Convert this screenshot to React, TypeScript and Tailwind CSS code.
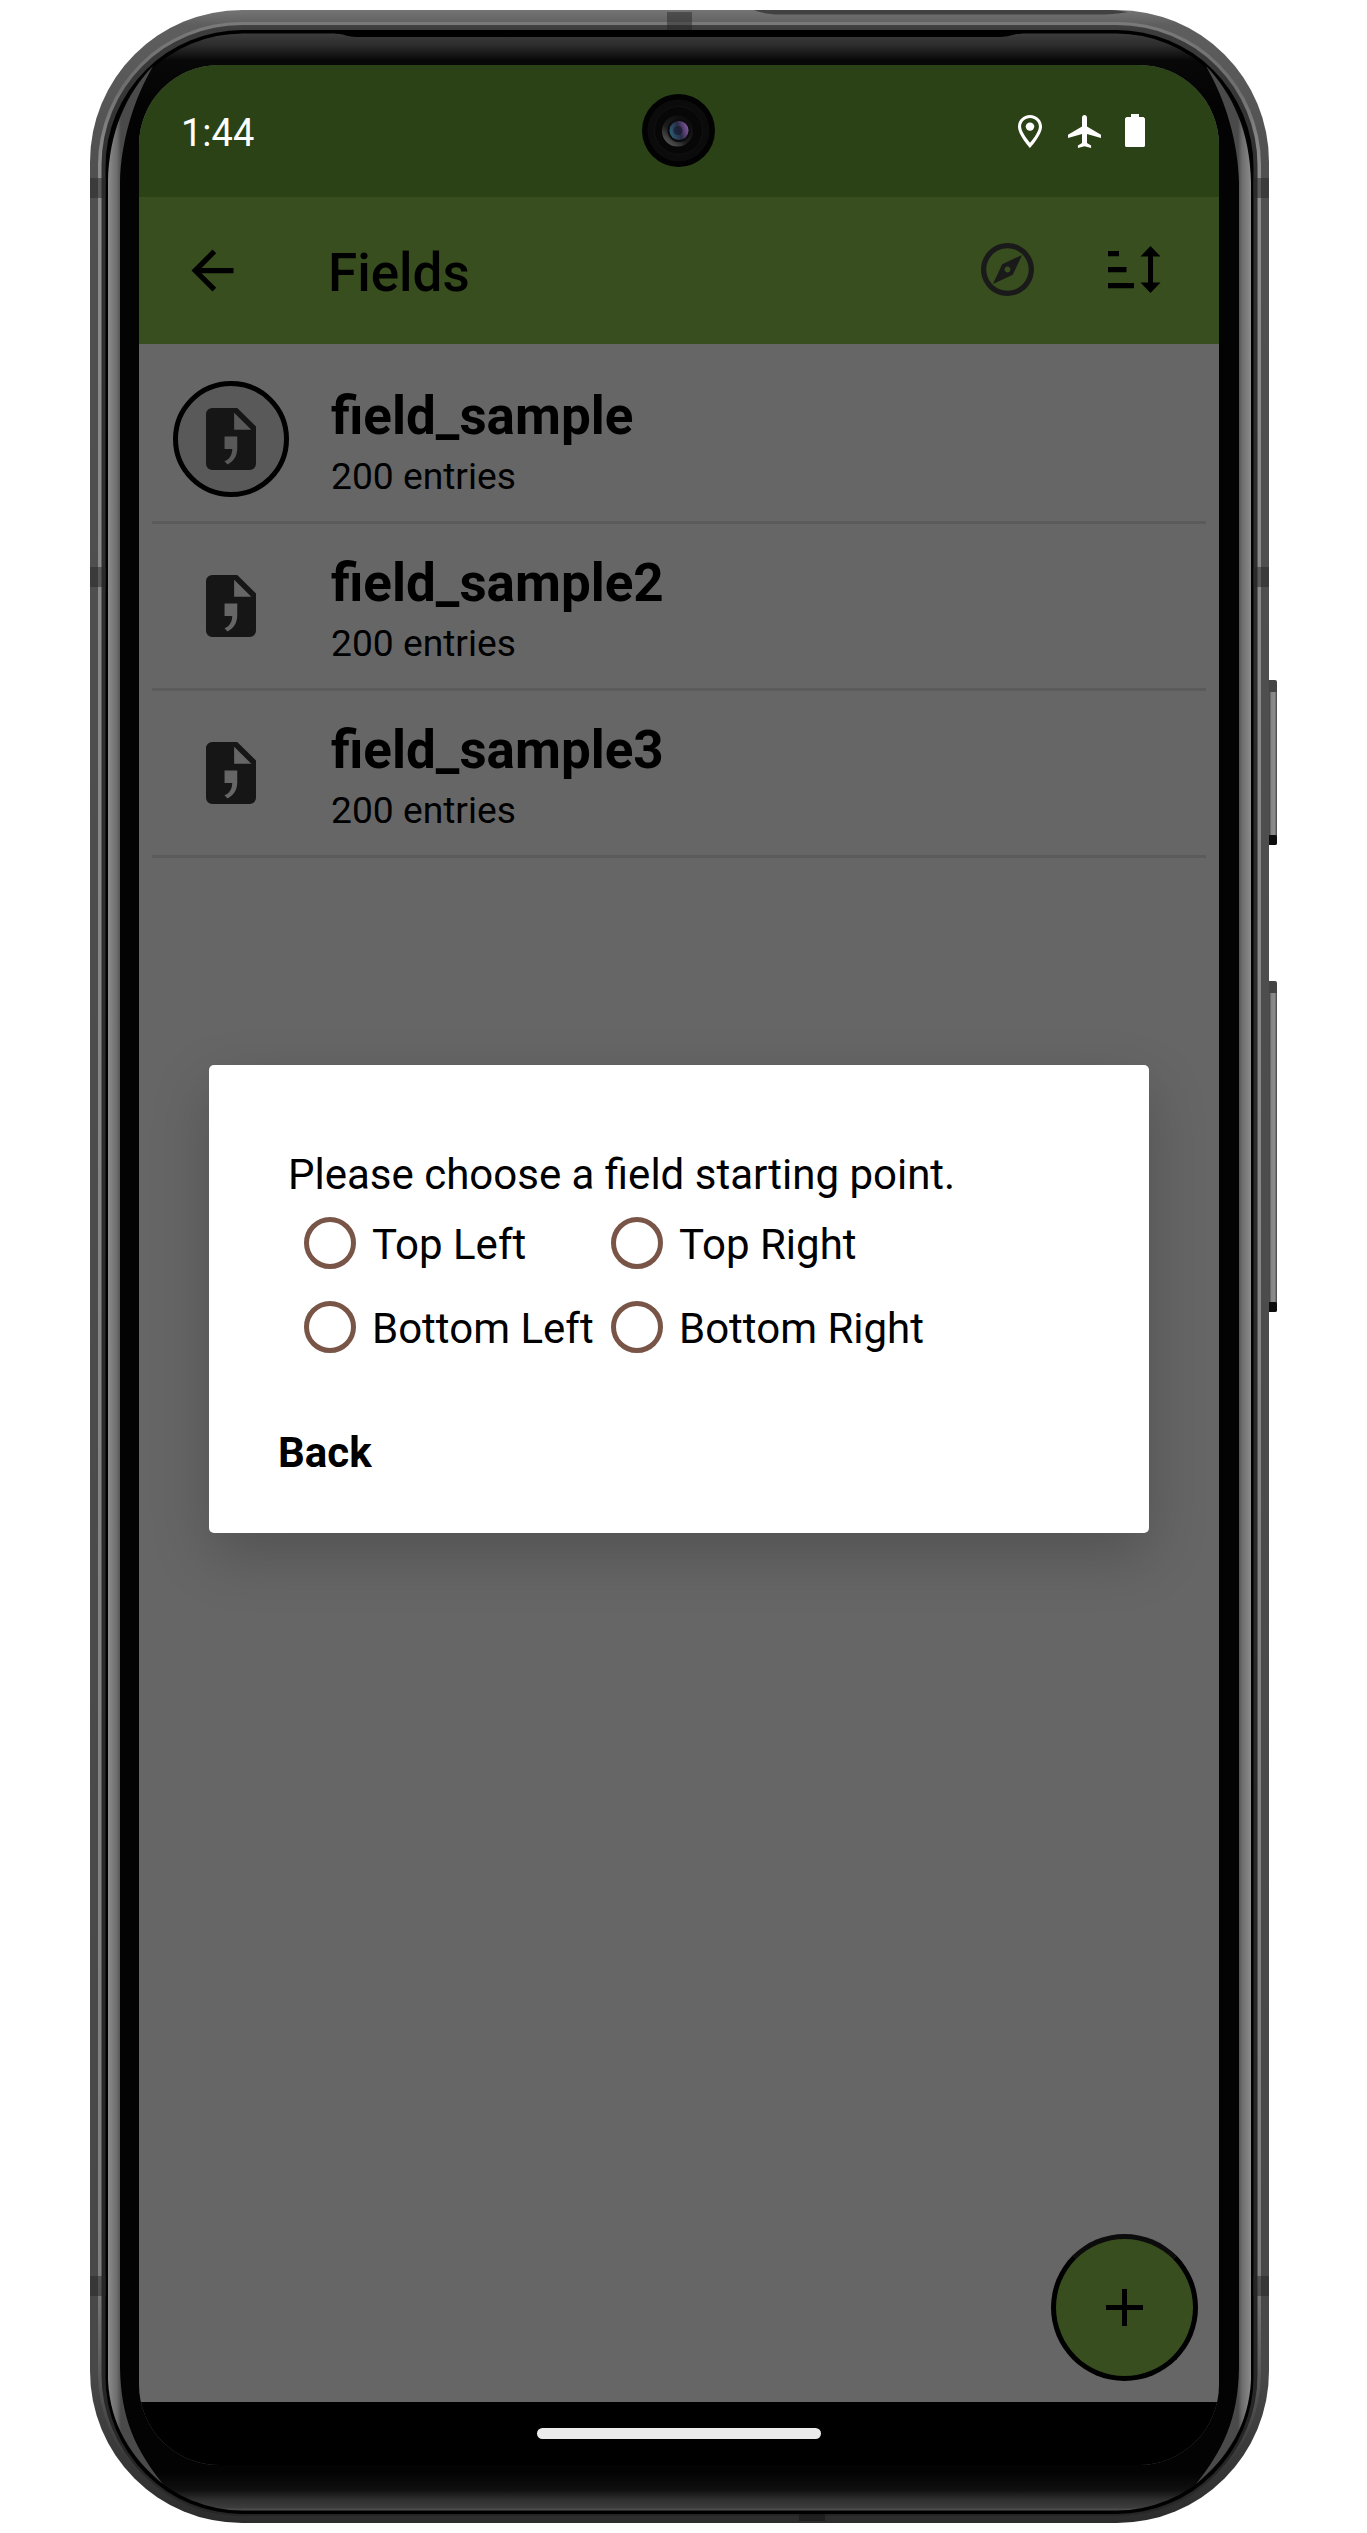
const FIELDS = [
  { name: "field_sample", entries: "200 entries", active: true },
  { name: "field_sample2", entries: "200 entries", active: false },
  { name: "field_sample3", entries: "200 entries", active: false },
];

const CORNERS = [
  ["Top Left", "Top Right"],
  ["Bottom Left", "Bottom Right"],
];

function Side() {
  return (
    <g>
      {/* glass edge highlight */}
      <path
        d="M153 66C126 94 109 132 108 182V2380C110 2424 131 2458 163 2484C136 2450 121 2420 120 2368V182C121 142 133 101 153 66Z"
        fill="url(#shine)"
      />
      {[178, 567, 2276].map((y) => (
        <rect key={y} x="90" y={y} width="16" height="20" fill="#262626" fillOpacity="0.5" />
      ))}
    </g>
  );
}

function PhoneBody() {
  return (
    <svg className="absolute inset-0" width="1367" height="2533" viewBox="0 0 1367 2533" fill="none">
      <defs>
        <linearGradient id="metal" x1="0" y1="10" x2="0" y2="2523" gradientUnits="userSpaceOnUse">
          <stop offset="0" stopColor="#747474" />
          <stop offset="0.006" stopColor="#5e5e5e" />
          <stop offset="0.06" stopColor="#505050" />
          <stop offset="0.94" stopColor="#484848" />
          <stop offset="0.985" stopColor="#333" />
          <stop offset="1" stopColor="#2c2c2c" />
        </linearGradient>
        <linearGradient id="ridge" x1="0" y1="10" x2="0" y2="2523" gradientUnits="userSpaceOnUse">
          <stop offset="0" stopColor="#7c7c7c" />
          <stop offset="0.03" stopColor="#6e6e6e" />
          <stop offset="0.06" stopColor="#8c8c8c" />
          <stop offset="0.9" stopColor="#808080" />
          <stop offset="0.96" stopColor="#484848" />
          <stop offset="1" stopColor="#222" />
        </linearGradient>
        <linearGradient id="groove" x1="0" y1="10" x2="0" y2="2523" gradientUnits="userSpaceOnUse">
          <stop offset="0" stopColor="#525252" />
          <stop offset="0.008" stopColor="#3c3c3c" />
          <stop offset="0.06" stopColor="#303030" />
          <stop offset="1" stopColor="#262626" />
        </linearGradient>
        <linearGradient id="glass" x1="0" y1="33" x2="0" y2="2510" gradientUnits="userSpaceOnUse">
          <stop offset="0" stopColor="#3c3c3c" />
          <stop offset="0.005" stopColor="#2c2c2c" />
          <stop offset="0.011" stopColor="#080808" />
          <stop offset="0.03" stopColor="#030303" />
          <stop offset="0.985" stopColor="#030303" />
          <stop offset="0.992" stopColor="#101010" />
          <stop offset="0.996" stopColor="#303030" />
          <stop offset="0.999" stopColor="#3c3c3c" />
          <stop offset="1" stopColor="#505050" />
        </linearGradient>
        <linearGradient id="shine" x1="108" y1="0" x2="121" y2="0" gradientUnits="userSpaceOnUse">
          <stop offset="0" stopColor="#8c8c8c" />
          <stop offset="0.7" stopColor="#6c6c6c" />
          <stop offset="1" stopColor="#4a4a4a" />
        </linearGradient>
        <linearGradient id="key" x1="1269" y1="0" x2="1277" y2="0" gradientUnits="userSpaceOnUse">
          <stop offset="0" stopColor="#3a3a3a" />
          <stop offset="0.3" stopColor="#858585" />
          <stop offset="0.7" stopColor="#8c8c8c" />
          <stop offset="1" stopColor="#444" />
        </linearGradient>
      </defs>

      {[
        [680, 165],
        [981, 331],
      ].map(([y, h]) => (
        <g key={y}>
          <rect x="1266" y={y} width="11" height={h} rx="2" fill="#444" />
          <rect x="1269" y={y + 12} width="8" height={h - 22} fill="url(#key)" />
          <rect x="1266" y={y + h - 10} width="11" height="10" rx="2" fill="#0c0c0c" />
        </g>
      ))}

      <rect x="90" y="10" width="1179" height="2513" rx="152" fill="url(#metal)" />
      <path d="M754 10H1112L1128 12C1118 14 1108 14.500 1098 14.500H780C770 14.500 762 13 754 10Z" fill="#414141" />
      <rect x="98" y="22" width="1163" height="2494" rx="143" fill="url(#ridge)" />
      <rect x="101.500" y="25" width="1156" height="2490" rx="140" fill="url(#groove)" />
      <rect x="105.500" y="30" width="1148" height="2484" rx="137" fill="#000" />
      <rect x="108" y="33.500" width="1143" height="2477" rx="135" fill="url(#glass)" />
      <path d="M335 32H1022V33.500C1012 34 1010 37 1000 37H357C347 37 345 34 335 33.500Z" fill="#000" />

      <Side />
      <g transform="translate(1359 0) scale(-1 1)">
        <Side />
      </g>
      <rect x="667" y="12" width="25" height="18" fill="#222" fillOpacity="0.45" />
      <rect x="799" y="2514" width="26" height="7" fill="#151515" fillOpacity="0.6" />
    </svg>
  );
}

function Camera() {
  return (
    <svg className="absolute left-[503px] top-[29px]" width="73" height="73" viewBox="0 0 73 73">
      <defs>
        <linearGradient id="lens" x1="0" y1="0.6" x2="1" y2="0.3">
          <stop offset="0" stopColor="#2a5f74" />
          <stop offset="0.5" stopColor="#292a45" />
          <stop offset="1" stopColor="#8a5aa0" />
        </linearGradient>
        <linearGradient id="lensRing" x1="0" y1="1" x2="0.8" y2="0">
          <stop offset="0" stopColor="#707070" />
          <stop offset="0.45" stopColor="#1c1c1c" />
          <stop offset="1" stopColor="#0a0a0a" />
        </linearGradient>
      </defs>
      <circle cx="36.500" cy="36.500" r="36.500" fill="#020202" />
      <circle cx="36.500" cy="36.500" r="31" fill="#0b0b0b" />
      <circle cx="36.500" cy="36.500" r="24" fill="#070707" stroke="#121212" strokeWidth="1" />
      <circle cx="35.500" cy="37" r="15.500" fill="url(#lensRing)" />
      <circle cx="37" cy="36.500" r="11.500" fill="#0c0c10" />
      <circle cx="37" cy="36.500" r="9.500" fill="url(#lens)" />
      <circle cx="36" cy="36.500" r="4.500" fill="#171a30" fillOpacity="0.7" />
    </svg>
  );
}

function FileCommaIcon() {
  return (
    <svg width="50" height="62" viewBox="4 2 16 20" preserveAspectRatio="none" fill="#161616">
      <path
        fillRule="evenodd"
        d="M6 2H14L20 8V20A2 2 0 0 1 18 22H6A2 2 0 0 1 4 20V4A2 2 0 0 1 6 2ZM13 3.500V9H18.500ZM9.930 11.200V15.200H12.400C12.400 17 11.500 18.600 9.900 19.200L10.900 20.200C13 19.200 14 17.300 14 15V11.200Z"
      />
    </svg>
  );
}

function StatusBar() {
  return (
    <div className="flex h-[132px] items-start justify-between bg-[#2b4217] pl-[42px] pr-[74px] text-white">
      <span className="mt-[46px] text-[38px] leading-[44px]">1:44</span>
      <div className="mt-[49px] flex h-[34px] items-start">
        <svg className="mt-px" width="24" height="33" viewBox="5 2 14 20" preserveAspectRatio="none" fill="#fff">
          <path d="M12 2C8.130 2 5 5.130 5 9c0 5.250 7 13 7 13s7-7.750 7-13c0-3.870-3.130-7-7-7zM6.800 9c0-2.870 2.330-5.200 5.200-5.200s5.200 2.330 5.200 5.200c0 2.880-2.880 7.190-5.200 9.880C9.920 16.210 6.800 11.850 6.800 9z" />
          <circle cx="12" cy="9" r="2.500" />
        </svg>
        <svg className="ml-[26px] mt-px" width="33" height="33" viewBox="2 2 20 20" preserveAspectRatio="none" fill="#fff">
          <path d="M22 16v-2l-8.500-5V3.500c0-.83-.67-1.500-1.500-1.500s-1.500.67-1.500 1.500V9L2 14v2l8.500-2.500V19L8 20.500V22l4-1 4 1v-1.500L13.500 19v-5.500L22 16z" />
        </svg>
        <svg className="ml-6" width="20" height="33" viewBox="0 0 20 33" fill="#fff">
          <path d="M6 0h8v3h4.500L20 4.500V32L19 33H1L0 32V4.500L1.500 3H6z" />
        </svg>
      </div>
    </div>
  );
}

function AppBar() {
  return (
    <header className="flex h-[147px] items-start bg-[#384e1e] pl-[42px] pr-[58px]">
      <svg className="mt-[42px]" width="63" height="63" viewBox="0 0 24 24" fill="#000">
        <path d="M20 11H7.830l5.590-5.590L12 4l-8 8 8 8 1.410-1.410L7.830 13H20v-2z" />
      </svg>
      <h1 className="ml-[84px] mt-[45px] flex-1 text-[53px] leading-[62px] font-medium text-black">Fields</h1>
      <svg className="mt-[46px]" width="53" height="53" viewBox="2 2 20 20" fill="#1a1a1a">
        <path d="M12 2C6.480 2 2 6.480 2 12s4.480 10 10 10 10-4.480 10-10S17.520 2 12 2zm0 18c-4.410 0-8-3.590-8-8s3.590-8 8-8 8 3.590 8 8-3.590 8-8 8zm-5.500-2.500l7.510-3.490L17.500 6.500 9.990 9.990 6.500 17.500zm5.500-6.600c.61 0 1.100.49 1.100 1.100s-.49 1.100-1.100 1.100-1.100-.49-1.100-1.100.49-1.100 1.100-1.100z" />
      </svg>
      <svg className="ml-[74px] mt-[49px]" width="53" height="47" viewBox="0 0 53 47" fill="#000">
        <path d="M0 5h11v5.200H0zM0 21h18.500v5.200H0zM0 37h26v5.200H0z" />
        <path d="M42.500 0L52.500 10.500H45V36.500H52.500L42.500 47L32.500 36.500H40V10.500H32.500z" />
      </svg>
    </header>
  );
}

function FieldRow({ name, entries, active }: { name: string; entries: string; active: boolean }) {
  return (
    <li className="flex h-[167px] items-start border-b-[3px] border-[#5b5b5b] pl-[21px]">
      <div
        className={
          active
            ? "mt-6 flex size-[116px] items-center justify-center rounded-full border-[5px] border-black bg-[#595959]"
            : "mt-6 flex size-[116px] items-center justify-center"
        }
      >
        <FileCommaIcon />
      </div>
      <div className="ml-[42px] mt-7 text-black">
        <p className="text-[53px] leading-[62px] font-bold">{name}</p>
        <p className="mt-2 text-[37.2px] leading-[43px]">{entries}</p>
      </div>
    </li>
  );
}

function StartingPointDialog() {
  return (
    <div
      role="dialog"
      className="absolute left-[70px] top-[1000px] flex h-[468px] w-[940px] flex-col items-start rounded-[5px] bg-white pt-[85px] text-[42px] leading-[49px] text-black shadow-[0_22px_60px_rgba(0,0,0,0.2)]"
    >
      <p className="ml-[79px]">Please choose a field starting point.</p>
      <div className="ml-[95px] mt-[2px]">
        {CORNERS.map((row) => (
          <div key={row[0]} className="flex">
            {row.map((label) => (
              <label key={label} className="flex h-[84px] w-[307px] items-center whitespace-nowrap">
                <span className="size-[52px] shrink-0 rounded-full border-[5px] border-[#795548]" />
                <span className="ml-4 mt-[3px]">{label}</span>
              </label>
            ))}
          </div>
        ))}
      </div>
      <button className="ml-[69px] mt-[59px] font-bold">Back</button>
    </div>
  );
}

export default function App() {
  return (
    <div className="relative h-[2533px] w-[1367px] overflow-hidden bg-white pl-[139px] pt-[65px] font-[Roboto,sans-serif]">
      <PhoneBody />
      <main className="relative flex h-[2400px] w-[1080px] flex-col overflow-hidden rounded-[80px] bg-[#666]">
        <StatusBar />
        <Camera />
        <AppBar />
        <ul className="flex-1 px-[13px] pt-[13px]">
          {FIELDS.map((f) => (
            <FieldRow key={f.name} {...f} />
          ))}
        </ul>
        <div className="flex h-[63px] justify-center bg-black pt-[26px]">
          <div className="h-[11px] w-[284px] rounded-full bg-[#ebebeb]" />
        </div>
        <StartingPointDialog />
        <button className="absolute left-[912px] top-[2169px] flex size-[147px] items-center justify-center rounded-full border-[5px] border-black border-t-[#0c0c0c] bg-[#384e1e]">
          <svg width="37" height="37" viewBox="0 0 37 37" fill="#000">
            <path d="M16 0h5v16h16v5H21v16h-5V21H0v-5h16z" />
          </svg>
        </button>
      </main>
    </div>
  );
}
